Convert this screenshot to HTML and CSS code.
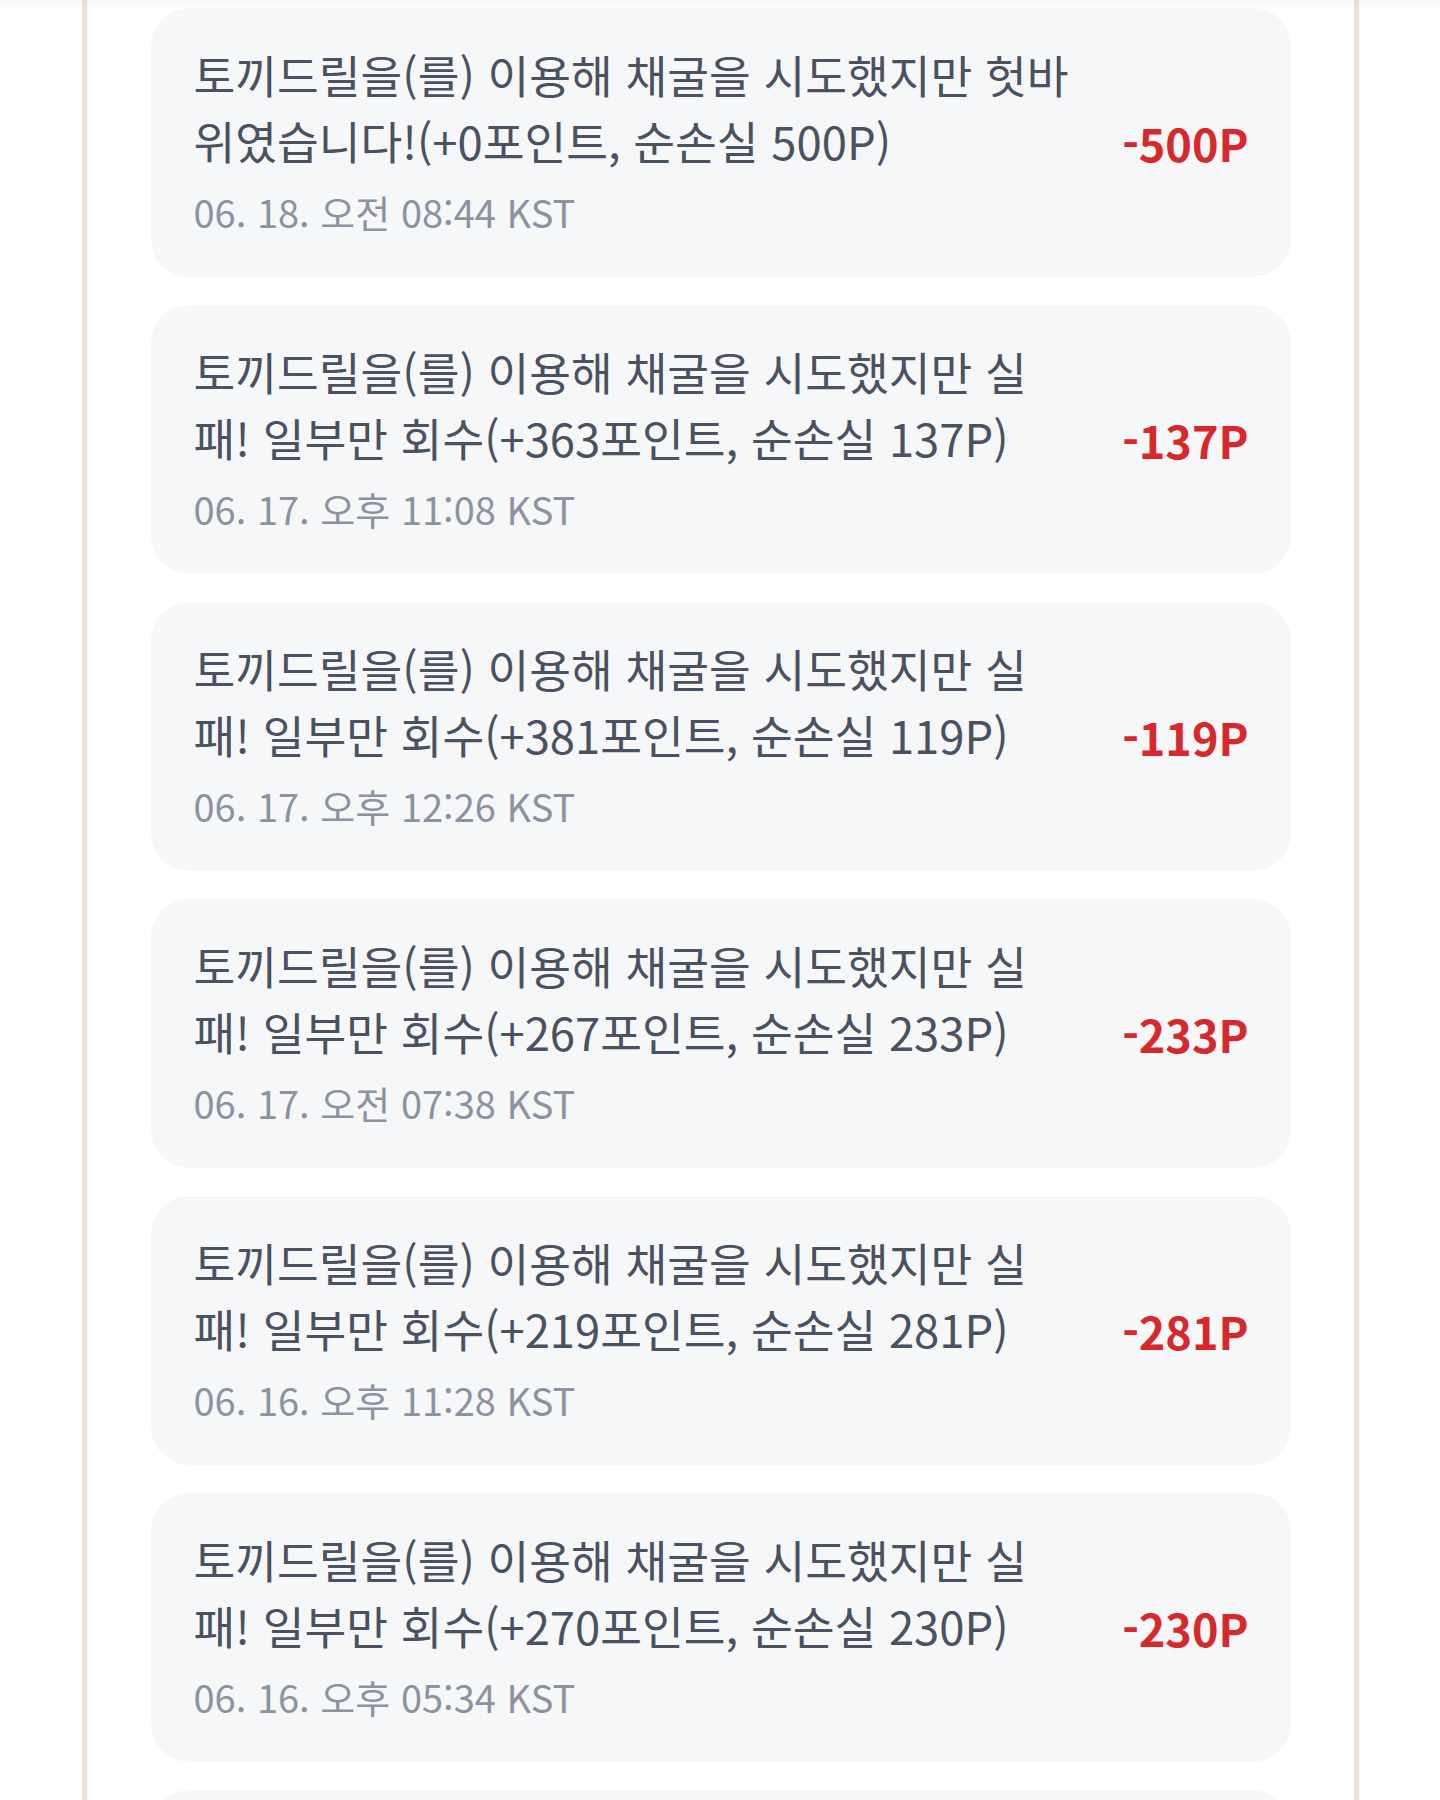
FILE: index.html
```html
<!DOCTYPE html>
<html lang="ko">
<head>
  <meta charset="UTF-8" />
  <meta name="viewport" content="width=device-width, initial-scale=1.0" />
  <title>포인트 내역</title>
  <link rel="stylesheet" href="styles.css">
</head>
<body>
  <div class="top-shade"></div>

  <main class="panel">
    <ul class="history-list">
      <li class="history-item">
        <div class="history-info">
          <p class="history-text">토끼드릴을(를) 이용해 채굴을 시도했지만 헛바위였습니다!(+0포인트, 순손실 500P)</p>
          <p class="history-date">06. 18. 오전 08:44 KST</p>
        </div>
        <span class="history-amount">-500P</span>
      </li>
      <li class="history-item">
        <div class="history-info">
          <p class="history-text">토끼드릴을(를) 이용해 채굴을 시도했지만 실패! 일부만 회수(+363포인트, 순손실 137P)</p>
          <p class="history-date">06. 17. 오후 11:08 KST</p>
        </div>
        <span class="history-amount">-137P</span>
      </li>
      <li class="history-item">
        <div class="history-info">
          <p class="history-text">토끼드릴을(를) 이용해 채굴을 시도했지만 실패! 일부만 회수(+381포인트, 순손실 119P)</p>
          <p class="history-date">06. 17. 오후 12:26 KST</p>
        </div>
        <span class="history-amount">-119P</span>
      </li>
      <li class="history-item">
        <div class="history-info">
          <p class="history-text">토끼드릴을(를) 이용해 채굴을 시도했지만 실패! 일부만 회수(+267포인트, 순손실 233P)</p>
          <p class="history-date">06. 17. 오전 07:38 KST</p>
        </div>
        <span class="history-amount">-233P</span>
      </li>
      <li class="history-item">
        <div class="history-info">
          <p class="history-text">토끼드릴을(를) 이용해 채굴을 시도했지만 실패! 일부만 회수(+219포인트, 순손실 281P)</p>
          <p class="history-date">06. 16. 오후 11:28 KST</p>
        </div>
        <span class="history-amount">-281P</span>
      </li>
      <li class="history-item">
        <div class="history-info">
          <p class="history-text">토끼드릴을(를) 이용해 채굴을 시도했지만 실패! 일부만 회수(+270포인트, 순손실 230P)</p>
          <p class="history-date">06. 16. 오후 05:34 KST</p>
        </div>
        <span class="history-amount">-230P</span>
      </li>
      <li class="history-item">
        <div class="history-info">
          <p class="history-text">토끼드릴을(를) 이용해 채굴을 시도했지만 실패! 일부만 회수(+312포인트, 순손실 188P)</p>
          <p class="history-date">06. 16. 오전 09:12 KST</p>
        </div>
        <span class="history-amount">-188P</span>
      </li>
    </ul>
  </main>
</body>
</html>
```

FILE: styles.css
```css
:root {
  --frame: #eee4d6;
  --card: #f6f7f9;
  --text: #4a5161;
  --muted: #8b93a0;
  --minus: #d7282c;
}

body {
  margin: 0;
  background: #ffffff;
  font-family: "Noto Sans CJK KR", "Noto Sans", sans-serif;
  color: var(--text);
}

.top-shade {
  position: fixed;
  top: 0;
  left: 0;
  right: 0;
  height: 10px;
  background: linear-gradient(rgba(0, 0, 0, 0.035), rgba(0, 0, 0, 0));
  pointer-events: none;
}

.panel {
  width: 1267px;
  margin: 0 auto;
  min-height: 1800px;
  border-left: 5px solid var(--frame);
  border-right: 5px solid var(--frame);
  box-sizing: content-box;
}

.history-list {
  list-style: none;
  margin: 0;
  padding: 8px 63px 0 64px;
  display: flex;
  flex-direction: column;
  gap: 28px;
}

.history-item {
  background: var(--card);
  border-radius: 38px;
  height: 269px;
  box-sizing: border-box;
  padding: 0 42px 0 43px;
  display: flex;
  align-items: center;
  gap: 40px;
}

.history-info {
  flex: 1;
  max-width: 884px;
}

.history-text {
  margin: 0;
  font-size: 45.4px;
  line-height: 66px;
}

.history-date {
  margin: 7px 0 0;
  font-size: 38px;
  line-height: 64px;
  color: var(--muted);
}

.history-amount {
  margin-left: auto;
  font-size: 45px;
  font-weight: 700;
  color: var(--minus);
  white-space: nowrap;
}
```
